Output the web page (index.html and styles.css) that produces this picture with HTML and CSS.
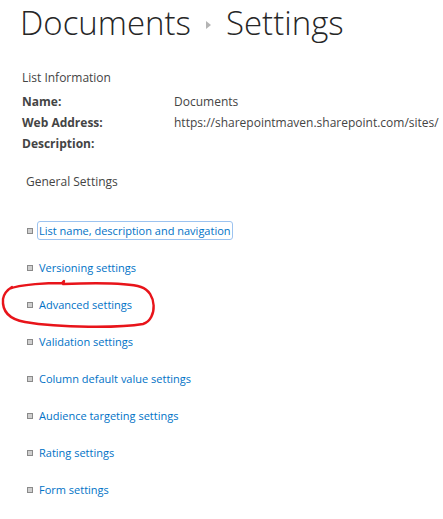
FILE: index.html
```html
<!DOCTYPE html>
<html>
<head>
<meta charset="utf-8">
<link rel="stylesheet" href="styles.css">
</head>
<body>
<div class="page">
  <h1 class="title">
    <span class="crumb">Documents</span>
    <span class="sep"></span>
    <span class="crumb">Settings</span>
  </h1>
  <section class="info">
    <div class="info-head">List Information</div>
    <div class="row"><span class="label">Name:</span><span class="value">Documents</span></div>
    <div class="row"><span class="label">Web Address:</span><span class="value">https://sharepointmaven.sharepoint.com/sites/</span></div>
    <div class="row"><span class="label">Description:</span><span class="value"></span></div>
  </section>
  <section class="general">
    <div class="general-head">General Settings</div>
    <ul class="links">
      <li><span class="bullet"></span><a class="link focused">List name, description and navigation</a></li>
      <li><span class="bullet"></span><a class="link">Versioning settings</a></li>
      <li><span class="bullet"></span><a class="link">Advanced settings</a></li>
      <li><span class="bullet"></span><a class="link">Validation settings</a></li>
      <li><span class="bullet"></span><a class="link">Column default value settings</a></li>
      <li><span class="bullet"></span><a class="link">Audience targeting settings</a></li>
      <li><span class="bullet"></span><a class="link">Rating settings</a></li>
      <li><span class="bullet"></span><a class="link">Form settings</a></li>
    </ul>
  </section>
  <svg class="annotation" width="443" height="519" viewBox="0 0 443 519">
    <path d="M 9 289 C 20 284, 50 283, 62 283 L 64 281 L 63 284 C 90 283, 125 282, 141 287 C 157 292, 158 319, 143 324 C 120 328, 60 328, 25 322 C 8 319, 2 311, 3 299 C 4 293, 7 290, 12 287" fill="none" stroke="#e8141a" stroke-width="2.4" stroke-linecap="round" stroke-linejoin="round"/>
  </svg>
</div>
</body>
</html>
```

FILE: styles.css
```css
html, body {
  margin: 0;
  padding: 0;
  background: #ffffff;
}

.page {
  position: relative;
  width: 443px;
  height: 519px;
  overflow: hidden;
  font-family: "Open Sans", "Liberation Sans", sans-serif;
  font-size: 12px;
  color: #444444;
}

.title {
  margin: 0;
  padding: 0 0 0 20px;
  height: 44px;
  display: flex;
  align-items: center;
  font-family: "Open Sans", "Liberation Sans", sans-serif;
  font-weight: 300;
  font-size: 33px;
  color: #262626;
  white-space: nowrap;
}

.sep {
  width: 0;
  height: 0;
  border-left: 5px solid #b4b4b4;
  border-top: 4px solid transparent;
  border-bottom: 4px solid transparent;
  margin: 6px 15px 0 15px;
}

.info {
  margin-top: 23px;
  padding-left: 22px;
}

.info-head {
  line-height: 21px;
  margin-bottom: 3px;
}

.row {
  display: flex;
  line-height: 21px;
  height: 21px;
  white-space: nowrap;
}

.label {
  width: 152px;
  flex: none;
  font-weight: 700;
}

.general {
  margin-top: 17px;
  padding-left: 26px;
}

.general-head {
  line-height: 21px;
}

.links {
  list-style: none;
  margin: 20px 0 0 0;
  padding: 0;
}

.links li {
  height: 37px;
  display: flex;
  align-items: center;
}

.bullet {
  width: 4px;
  height: 4px;
  border: 1px solid #8a8a8a;
  background: #cfcfcf;
  margin-left: 1px;
  margin-right: 5px;
  flex: none;
}

.link {
  color: #0072c6;
  font-size: 11px;
  line-height: 17px;
  padding: 0 1px;
  white-space: nowrap;
}

.focused {
  outline: 1px solid #9cc3f0;
  border-radius: 2px;
}

.annotation {
  position: absolute;
  left: 0;
  top: 0;
  pointer-events: none;
}
```
